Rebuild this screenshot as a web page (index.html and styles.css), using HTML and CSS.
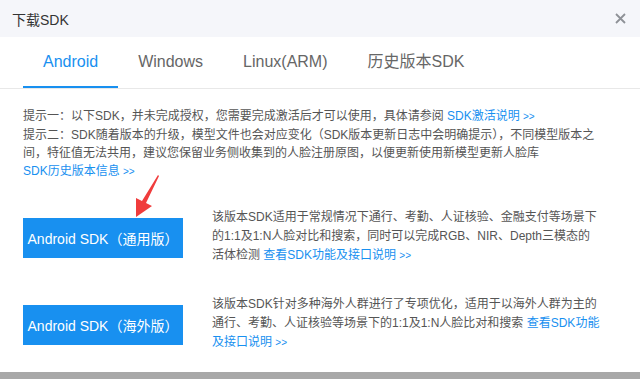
FILE: index.html
```html
<!DOCTYPE html>
<html lang="zh-CN">
<head>
    <meta charset="UTF-8">
    <meta name="viewport" content="width=device-width, initial-scale=1.0">
    <title>下载SDK</title>
    <link rel="stylesheet" href="styles.css">
</head>
<body>
    <div class="dialog">
        <div class="dialog-header">
            <div class="dialog-title">下载SDK</div>
            <svg class="close-icon" width="11" height="11" viewBox="0 0 11 11" fill="none" stroke="currentColor" stroke-width="1.8">
                <path d="M1 1L10 10M10 1L1 10"/>
            </svg>
        </div>

        <div class="tabs">
            <div class="tab active">Android</div>
            <div class="tab">Windows</div>
            <div class="tab">Linux(ARM)</div>
            <div class="tab">历史版本SDK</div>
        </div>

        <div class="notes">
            <p>提示一：以下SDK，并未完成授权，您需要完成激活后才可以使用，具体请参阅 <a class="link">SDK激活说明 <span class="more">&gt;&gt;</span></a></p>
            <p>提示二：SDK随着版本的升级，模型文件也会对应变化（SDK版本更新日志中会明确提示），不同模型版本之间，特征值无法共用，建议您保留业务侧收集到的人脸注册原图，以便更新使用新模型更新人脸库</p>
            <p><a class="link">SDK历史版本信息 <span class="more">&gt;&gt;</span></a></p>
        </div>

        <div class="sdk-list">
            <div class="sdk-row">
                <button class="sdk-btn">Android SDK（通用版）</button>
                <div class="sdk-desc">
                    该版本SDK适用于常规情况下通行、考勤、人证核验、金融支付等场景下<br>的1:1及1:N人脸对比和搜索，同时可以完成RGB、NIR、Depth三模态的<br>活体检测 <a class="link">查看SDK功能及接口说明 <span class="more">&gt;&gt;</span></a>
                </div>
            </div>
            <div class="sdk-row">
                <button class="sdk-btn">Android SDK（海外版）</button>
                <div class="sdk-desc">
                    该版本SDK针对多种海外人群进行了专项优化，适用于以海外人群为主的<br>通行、考勤、人证核验等场景下的1:1及1:N人脸比对和搜索 <a class="link">查看SDK功能<br>及接口说明 <span class="more">&gt;&gt;</span></a>
                </div>
            </div>
        </div>

        <!-- annotation arrow pointing at the first download button -->
        <svg class="mark-arrow" width="32" height="50" viewBox="0 0 32 50">
            <polygon points="28,5 29,6 16,33 22,36 6,47 6,28 12,31" fill="#f03c3c"/>
        </svg>
    </div>
</body>
</html>
```

FILE: styles.css
```css
:root {
    --primary-color: #1890f0;
    --text-primary: #333333;
    --text-secondary: #555555;
    --tab-color: #666666;
    --border-color: #e8e8e8;
    --header-bg: #f5f6fa;
}

* {
    margin: 0;
    padding: 0;
    box-sizing: border-box;
}

body {
    background: #a8a8a8;
    font-family: "Liberation Sans", "Noto Sans CJK SC", sans-serif;
}

.dialog {
    position: relative;
    height: 372px;
    background: #ffffff;
}

.dialog-header {
    height: 37px;
    padding: 0 14px 0 12px;
    display: flex;
    align-items: center;
    justify-content: space-between;
    background: var(--header-bg);
}

.dialog-title {
    font-size: 14px;
    color: var(--text-primary);
}

.close-icon {
    color: #8e9197;
}

.tabs {
    display: flex;
    padding: 0 23px;
    border-bottom: 1px solid var(--border-color);
}

.tab {
    padding: 0 20px;
    font-size: 16px;
    line-height: 49px;
    color: var(--tab-color);
    border-bottom: 2px solid transparent;
}

.tab.active {
    color: var(--primary-color);
    border-bottom-color: var(--primary-color);
}

.notes {
    margin-top: 18px;
    padding: 0 36px 0 23px;
    font-size: 12px;
    line-height: 18px;
    color: var(--text-secondary);
}

.link {
    color: var(--primary-color);
}

.more {
    font-size: 10px;
}

.sdk-list {
    margin-top: 27px;
    padding: 0 23px;
    display: flex;
    flex-direction: column;
    gap: 30px;
}

.sdk-row {
    display: flex;
    align-items: flex-start;
}

.sdk-btn {
    flex-shrink: 0;
    width: 160px;
    height: 40px;
    margin-top: 10px;
    border: none;
    background: var(--primary-color);
    color: #ffffff;
    font-family: inherit;
    font-size: 14px;
}

.sdk-desc {
    width: 400px;
    margin-left: 29px;
    font-size: 12px;
    line-height: 19px;
    color: var(--text-secondary);
}

.mark-arrow {
    position: absolute;
    left: 130px;
    top: 170px;
}
```
